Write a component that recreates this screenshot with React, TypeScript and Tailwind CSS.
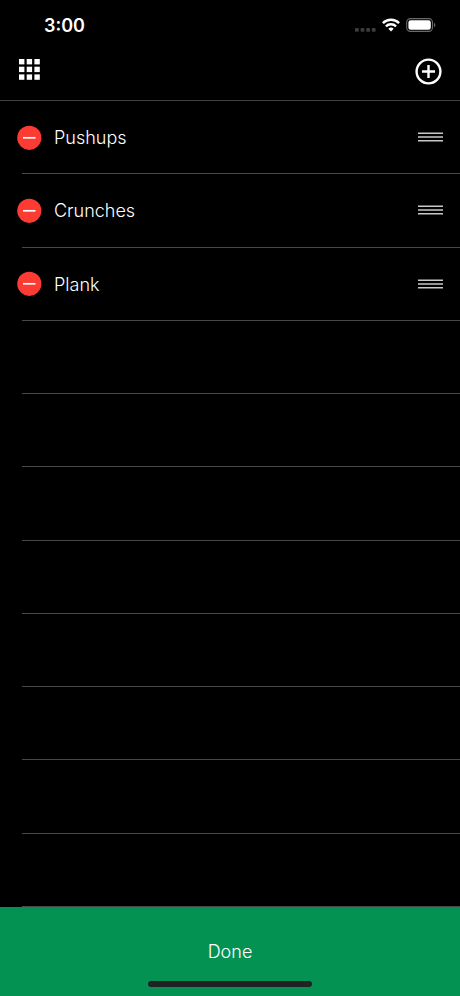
const exercises = ["Pushups", "Crunches", "Plank"];
const ROW_COUNT = 11;

export default function App() {
  const rows = Array.from({ length: ROW_COUNT }, (_, i) => exercises[i]);

  return (
    <div className="flex min-h-screen flex-col bg-black font-['Inter','Liberation_Sans',sans-serif] text-white">
      <StatusBar />

      <header className="flex h-[51px] items-start justify-between border-b border-[#424242] px-[18px] pt-2">
        <button type="button" aria-label="All workouts">
          <GridIcon />
        </button>
        <button type="button" aria-label="Add exercise">
          <PlusIcon />
        </button>
      </header>

      <ul className="grid flex-1 auto-rows-fr">
        {rows.map((name, i) => (
          <li key={i} className="ml-[22px] flex min-h-12 items-center border-b border-[#484848]">
            {name && <ExerciseRow name={name} />}
          </li>
        ))}
      </ul>

      <footer className="flex h-[89px] flex-col items-center bg-[#049252]">
        <button type="button" className="w-full flex-1 pt-4 text-[18px] leading-6 font-light">
          Done
        </button>
        <div className="mb-[9px] h-[6px] w-[164px] rounded-full bg-[#1f2323]" />
      </footer>
    </div>
  );
}

function StatusBar() {
  return (
    <div className="flex h-[50px] items-center justify-between pr-6 pl-11">
      <span className="pt-0.5 text-[18px] leading-6 font-semibold">3:00</span>
      <div className="flex items-center gap-[6px]">
        <CellularIcon />
        <WifiIcon />
        <BatteryIcon />
      </div>
    </div>
  );
}

function ExerciseRow({ name }: { name: string }) {
  return (
    <div className="-ml-[5px] flex flex-1 items-center pr-[17px]">
      <button type="button" aria-label={`Delete ${name}`}>
        <MinusIcon />
      </button>
      <span className="ml-3 flex-1 pt-0.5 text-[18px] leading-6 font-light">{name}</span>
      <button type="button" aria-label={`Reorder ${name}`}>
        <GripIcon />
      </button>
    </div>
  );
}

function GridIcon() {
  const steps = [1, 8.7, 16.4];

  return (
    <svg width="23" height="23" viewBox="0 0 23 23" fill="white" className="block">
      {steps.map((y) =>
        steps.map((x) => <rect key={`${x}-${y}`} x={x} y={y} width="5.4" height="5.4" />)
      )}
    </svg>
  );
}

function PlusIcon() {
  return (
    <svg width="27" height="27" viewBox="0 0 27 27" fill="none" stroke="white" className="block">
      <circle cx="13.5" cy="13.5" r="11.9" strokeWidth="2.4" />
      <path d="M13.5 7v13M7 13.5h13" strokeWidth="2.4" />
    </svg>
  );
}

function MinusIcon() {
  return (
    <svg width="25" height="25" viewBox="0 0 25 25" className="block">
      <circle cx="12.3" cy="12.8" r="12.1" fill="#fc3b32" />
      <path d="M6 12.8h12.5" stroke="white" strokeWidth="1.7" />
    </svg>
  );
}

function GripIcon() {
  return (
    <svg width="25" height="10" viewBox="0 0 25 10" stroke="#c8c8c8" strokeWidth="1.4" className="block">
      <path d="M0 1.2h25M0 5h25M0 8.7h25" />
    </svg>
  );
}

function CellularIcon() {
  return (
    <svg width="22" height="14" viewBox="0 0 22 14" fill="#3c3c3c">
      {[1, 6.6, 12.2, 17.8].map((x) => (
        <rect key={x} x={x} y="9.9" width="3.8" height="3.8" rx="1" />
      ))}
    </svg>
  );
}

function WifiIcon() {
  return (
    <svg width="18" height="14" viewBox="0 0 18 14" fill="none" stroke="white" strokeWidth="2.4">
      <path d="M0.9 5.1a11.6 11.6 0 0 1 16.2 0" />
      <path d="M3.9 8.3a7.3 7.3 0 0 1 10.2 0" />
      <path d="M9 13.4 6.3 10.7a3.9 3.9 0 0 1 5.4 0z" fill="white" stroke="none" />
    </svg>
  );
}

function BatteryIcon() {
  return (
    <svg width="30" height="14" viewBox="0 0 30 14" fill="none">
      <rect x="0.7" y="0.6" width="25.8" height="12.8" rx="3.8" stroke="#6a6a6a" strokeWidth="1.1" />
      <rect x="2.4" y="2.3" width="22.4" height="9.4" rx="2.3" fill="white" />
      <path d="M28 4.8c1.8.7 1.8 3.7 0 4.4z" fill="#6a6a6a" />
    </svg>
  );
}
